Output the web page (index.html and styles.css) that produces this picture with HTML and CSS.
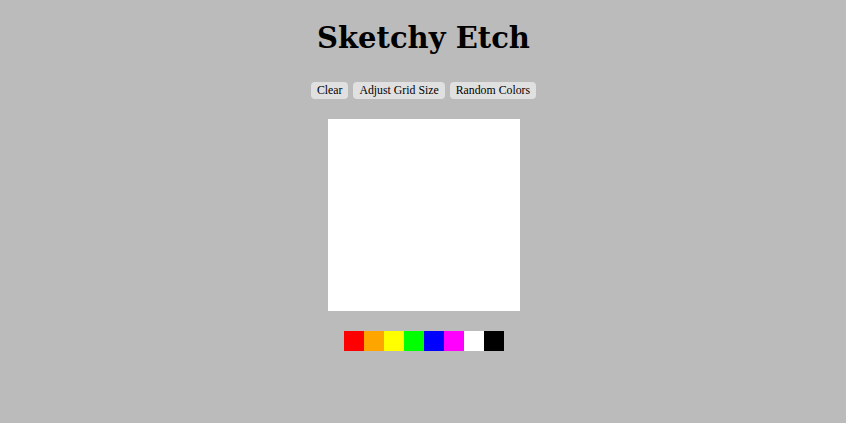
FILE: index.html
```html
<!DOCTYPE html>
<html>
<head>
<meta charset="utf-8">
<link rel="stylesheet" href="styles.css">
</head>
<body>
<div class="page">
  <h1 class="title">Sketchy Etch</h1>
  <div class="controls">
    <button class="btn">Clear</button>
    <button class="btn">Adjust Grid Size</button>
    <button class="btn">Random Colors</button>
  </div>
  <div class="grid"></div>
  <div class="palette">
    <div class="swatch red"></div>
    <div class="swatch orange"></div>
    <div class="swatch yellow"></div>
    <div class="swatch green"></div>
    <div class="swatch blue"></div>
    <div class="swatch magenta"></div>
    <div class="swatch white"></div>
    <div class="swatch black"></div>
  </div>
</div>
</body>
</html>
```
FILE: styles.css
```css
html, body {
  margin: 0;
  padding: 0;
  height: 100%;
  background: #bbbbbb;
}
.page {
  display: flex;
  flex-direction: column;
  align-items: center;
  padding-left: 1px;
  font-family: "DejaVu Serif", Georgia, serif;
}
.title {
  margin: 18px 0 0 0;
  font-size: 29px;
  line-height: 40px;
  font-weight: bold;
  color: #000;
}
.controls {
  display: flex;
  gap: 5px;
  margin-top: 24px;
}
.btn {
  font-family: "Liberation Serif", "Times New Roman", serif;
  font-size: 11.8px;
  height: 17px;
  padding: 0 6px;
  border: none;
  border-radius: 4px;
  background: #e0e0e0;
  color: #000;
  line-height: 17px;
}
.grid {
  width: 192px;
  height: 192px;
  background: #fff;
  margin-top: 20px;
}
.palette {
  display: flex;
  margin-top: 20px;
}
.swatch { width: 20px; height: 20px; }
.red { background: #ff0000; }
.orange { background: #ffa500; }
.yellow { background: #ffff00; }
.green { background: #00ff00; }
.blue { background: #0000ff; }
.magenta { background: #ff00ff; }
.white { background: #ffffff; }
.black { background: #000000; }
```
